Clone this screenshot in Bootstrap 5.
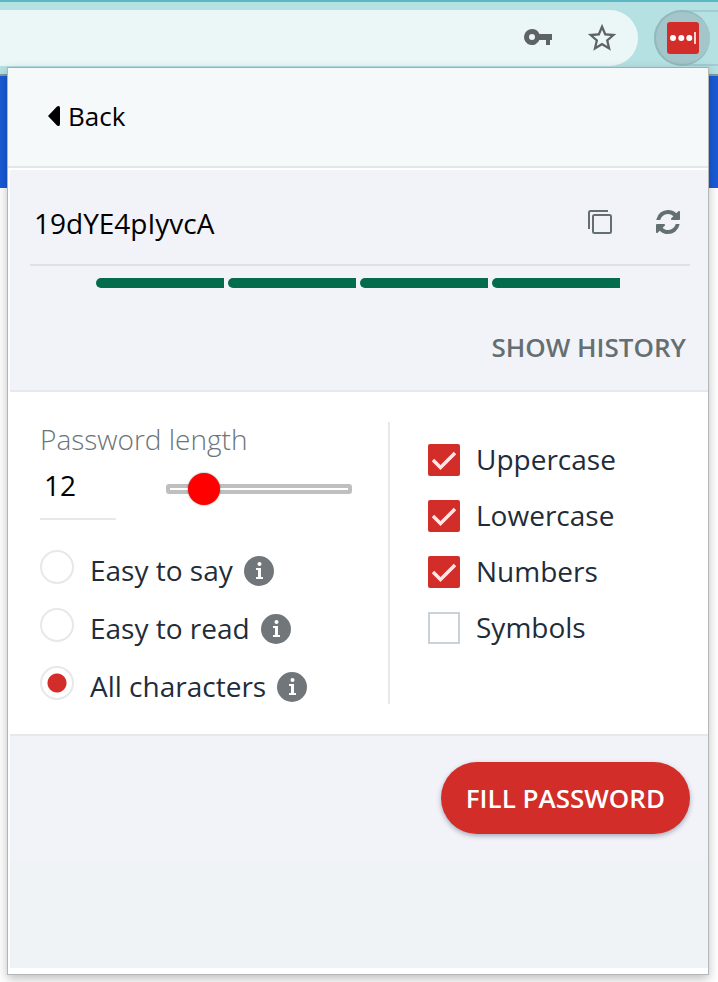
<!DOCTYPE html>
<html lang="en">
<head>
<meta charset="utf-8">
<meta name="viewport" content="width=device-width, initial-scale=1">
<title>Generate password</title>
<link href="https://cdn.jsdelivr.net/npm/bootstrap@5.3.0/dist/css/bootstrap.min.css" rel="stylesheet">
<style>
  body { font-family: "Open Sans", sans-serif; font-size: 28px; line-height: 40px; color: #1f2d3a; background: #fff; min-height: 100vh; }
  .browser-bar { background: #b5e1e3; border-top: 2px solid #5cb8c2; border-bottom: 2px solid #7d9ea6; height: 76px; padding-top: 8px; gap: 16px; }
  .address-box { height: 56px; background: #ebf7f7; border-radius: 0 28px 28px 0; padding-right: 20px; gap: 32px; }
  .bar-icon { width: 32px; height: 32px; }
  .ext-track { width: 64px; height: 56px; border: 2px solid #a1ccd0; border-right: 0; border-radius: 28px 0 0 28px; }
  .ext-btn { width: 56px; height: 56px; margin: -2px; background: #a2c6ca; border: 2px solid #93b9bd; border-width: 2px 0 2px 2px; }
  .page-band { height: 112px; background: #1a5bd7; }
  .popup { top: 67px; left: 7px; right: 9px; background: #fff; border: 1px solid #b3b6b6; border-top-color: #8fb5b8; box-shadow: 0 4px 10px rgba(0,0,0,.25); }
  .popup-head { height: 100px; padding: 0 40px 2px; background: #f5f9fa; border-bottom: 2px solid #e4e7e8; }
  .back-btn { font-size: 26px; color: #000; gap: 8px; }
  .pane-tint { background: #f2f3f8; border-bottom: 2px solid #e7e8ea; margin: 2px 0 0 2px; height: 222px; padding: 0 18px 0 20px; }
  .pw-row { height: 96px; border-bottom: 2px solid #dfe0e2; padding: 12px 8px 0 4px; gap: 40px; }
  .pw-row .btn { margin-bottom: 2px; }
  .pw-text { color: #000; min-width: 0; outline: 0; font-size: 28px; }
  .strength { gap: 4px; margin: 12px 70px 0 66px; }
  .strength-bar { height: 10px; background: #036c4c; border-radius: 5px 0 0 5px; }
  .history-btn { font-size: 26px; color: #646f72; margin: 40px 4px 0 0; }
  .options { padding: 30px 18px 30px 30px; border-bottom: 2px solid #e7e8ea; margin-left: 2px; }
  .opt-left { width: 350px; height: 282px; border-right: 2px solid #e7e8e9; }
  .opt-right { padding: 18px 0 0 38px; gap: 16px; }
  .opt-right label { padding-bottom: 2px; line-height: 38px; }
  .len-label { font-weight: 300; color: #6b7478; line-height: 34px; padding-bottom: 2px; }
  .len-row { gap: 50px; height: 62px; }
  .len-input { width: 76px; height: 62px; padding: 0 4px 6px; color: #000; border-bottom: 2px solid #e7e8e9; outline: 0; }
  .len-range { -webkit-appearance: none; appearance: none; width: 186px; height: 32px; margin: 0; background: transparent; }
  .len-range::-webkit-slider-runnable-track { height: 10px; border: 4px solid #bfbfbf; border-radius: 3px; background: #fff; }
  .len-range::-webkit-slider-thumb { -webkit-appearance: none; width: 32px; height: 32px; margin: -15px -3px 0; border-radius: 50%; background: #f00; box-shadow: 0 0 2px rgba(0,0,0,.5); }
  .radio-list { gap: 18px; margin-top: 30px; }
  .pick-radio, .pick-check { -webkit-appearance: none; appearance: none; flex: none; margin: 0; background: #fff; }
  .pick-radio { width: 34px; height: 34px; border: 2px solid #e7e8e9; border-radius: 50%; margin-right: 16px; }
  .pick-radio:checked { background: radial-gradient(circle, #d22d29 9px, #fff 10px); }
  .radio-line { height: 40px; }
  .info-btn { margin: 5px 0 0 10px; }
  .pick-check { width: 32px; height: 32px; border: 2px solid #cad1da; margin-right: 16px; }
  .pick-check:checked { border: 0; border-radius: 2px; background: #d22d29 url("data:image/svg+xml,%3Csvg xmlns='http://www.w3.org/2000/svg' viewBox='0 0 32 32'%3E%3Cpath d='M5 16l7.500 7.500L27 9' fill='none' stroke='%23fbe9e9' stroke-width='3.500'/%3E%3C/svg%3E"); }
  .popup-foot { background: #f2f3f8; margin-left: 2px; height: 124px; padding: 26px 18px 0; }
  .fill-btn { height: 72px; padding: 0 25px; border-radius: 36px; background: #d22d29; color: #fff; font-size: 26px; box-shadow: 0 2px 5px rgba(40,60,90,.4); }
  .fill-btn:hover { background: #b92522; color: #fff; }
  .popup-rest { height: 108px; background: #eff3f5; margin: 0 0 6px 2px; }
</style>
</head>
<body class="position-relative overflow-hidden">
<header class="browser-bar d-flex">
  <div class="address-box flex-grow-1 d-flex align-items-center justify-content-end">
    <button class="btn p-0 border-0 d-flex" aria-label="Passwords">
      <svg class="bar-icon" viewBox="0 0 32 32"><path fill="#5f6368" fill-rule="evenodd" d="M10 7a8 8 0 1 0 7.400 11H24v5h4v-5h2v-6H17.400A8 8 0 0 0 10 7zm0 5a3 3 0 1 1 0 6 3 3 0 0 1 0-6z"/></svg>
    </button>
    <button class="btn p-0 border-0 d-flex" aria-label="Bookmark">
      <svg class="bar-icon" viewBox="0 0 32 32"><path fill="#5f6368" transform="translate(-1 -1) scale(1.420)" d="M22 9.240l-7.190-.62L12 2 9.190 8.630 2 9.240l5.460 4.730L5.820 21 12 17.270 18.180 21l-1.630-7.030L22 9.240zM12 15.400l-3.760 2.270 1-4.280-3.320-2.880 4.380-.38L12 6.100l1.710 4.040 4.380.38-3.320 2.880 1 4.280L12 15.400z"/></svg>
    </button>
  </div>
  <div class="ext-track">
    <button class="ext-btn rounded-circle p-0 d-flex align-items-center justify-content-center" aria-label="Password manager">
      <svg width="32" height="32" viewBox="0 0 32 32"><rect width="32" height="32" rx="3" fill="#d22d29"/><g fill="#fff"><circle cx="6" cy="16" r="3"/><circle cx="14.300" cy="16" r="3"/><circle cx="22.300" cy="16" r="3"/><path opacity=".8" d="M27 10h2v12h-2z"/></g></svg>
    </button>
  </div>
</header>
<div class="page-band"></div>

<main class="popup position-absolute">
  <div class="popup-head d-flex align-items-center">
    <button class="btn back-btn p-0 border-0 d-flex align-items-center">
      <svg width="12" height="22" viewBox="0 0 12 22"><path d="M0 11L9 1.500Q12 0 12 3v16q0 3-3 1.500z"/></svg>Back
    </button>
  </div>

  <section class="pane-tint">
    <div class="pw-row d-flex align-items-center">
      <input class="pw-text flex-grow-1 border-0 bg-transparent p-0" type="text" value="19dYE4pIyvcA" aria-label="Generated password">
      <button class="btn p-0 border-0 d-flex" aria-label="Copy password">
        <svg width="28" height="28" viewBox="0 0 28 28" fill="none" stroke="#646f72" stroke-width="2"><rect x="7" y="7" width="18" height="18" rx="1.500"/><path d="M3 21V4.500Q3 3 4.500 3H22"/></svg>
      </button>
      <button class="btn p-0 border-0 d-flex" aria-label="Generate again">
        <svg width="28" height="28" viewBox="0 0 1792 1792"><path fill="#646f72" d="M1639 1056q0 5-1 7-64 268-268 434.500T892 1664q-146 0-282.500-55T366 1452l-129 129q-19 19-45 19t-45-19-19-45v-448q0-26 19-45t45-19h448q26 0 45 19t19 45-19 45l-137 137q71 66 161 102t187 36q134 0 250-65t186-179q11-17 53-117 8-23 30-23h192q13 0 22.500 9.500t9.500 22.500zm25-800v448q0 26-19 45t-45 19h-448q-26 0-45-19t-19-45 19-45l138-138Q1097 384 896 384q-134 0-250 65T460 628q-11 17-53 117-8 23-30 23H178q-13 0-22.500-9.500T146 736v-7q65-268 270-434.500T896 128q146 0 284 55.500T1425 340l130-129q19-19 45-19t45 19 19 45z"/></svg>
      </button>
    </div>
    <div class="strength d-flex" role="img" aria-label="Strong password">
      <div class="strength-bar flex-fill"></div>
      <div class="strength-bar flex-fill"></div>
      <div class="strength-bar flex-fill"></div>
      <div class="strength-bar flex-fill"></div>
    </div>
    <div class="d-flex justify-content-end">
      <button class="btn history-btn p-0 border-0 fw-semibold">SHOW HISTORY</button>
    </div>
  </section>

  <section class="options d-flex">
    <div class="opt-left">
      <label class="len-label d-block" for="len">Password length</label>
      <div class="len-row d-flex align-items-center">
        <input class="len-input border-top-0 border-start-0 border-end-0" id="len" type="text" inputmode="numeric" value="12">
        <input class="len-range" type="range" min="4" max="60" value="12" aria-label="Password length slider">
      </div>
      <div class="radio-list d-flex flex-column">
        <div class="radio-line d-flex align-items-start">
          <input class="pick-radio" type="radio" name="kind" id="say"><label for="say">Easy to say</label>
          <button class="btn info-btn p-0 border-0 d-flex" aria-label="About easy to say"><svg width="32" height="32" viewBox="0 0 32 32"><use href="#info"/></svg></button>
        </div>
        <div class="radio-line d-flex align-items-start">
          <input class="pick-radio" type="radio" name="kind" id="read"><label for="read">Easy to read</label>
          <button class="btn info-btn p-0 border-0 d-flex" aria-label="About easy to read"><svg width="32" height="32" viewBox="0 0 32 32"><use href="#info"/></svg></button>
        </div>
        <div class="radio-line d-flex align-items-start">
          <input class="pick-radio" type="radio" name="kind" id="all" checked><label for="all">All characters</label>
          <button class="btn info-btn p-0 border-0 d-flex" aria-label="About all characters"><svg width="32" height="32" viewBox="0 0 32 32"><use href="#info"/></svg></button>
        </div>
      </div>
    </div>
    <div class="opt-right d-flex flex-column">
      <div class="d-flex align-items-center"><input class="pick-check" type="checkbox" id="upper" checked><label for="upper">Uppercase</label></div>
      <div class="d-flex align-items-center"><input class="pick-check" type="checkbox" id="lower" checked><label for="lower">Lowercase</label></div>
      <div class="d-flex align-items-center"><input class="pick-check" type="checkbox" id="nums" checked><label for="nums">Numbers</label></div>
      <div class="d-flex align-items-center"><input class="pick-check" type="checkbox" id="syms"><label for="syms">Symbols</label></div>
    </div>
  </section>

  <div class="popup-foot d-flex justify-content-end align-items-start">
    <button class="btn fill-btn border-0 fw-semibold">FILL PASSWORD</button>
  </div>
  <div class="popup-rest"></div>
</main>

<svg class="d-none">
  <symbol id="info" viewBox="0 0 32 32"><circle cx="16" cy="16" r="15" fill="#70767a"/><g fill="#fff"><circle cx="16.500" cy="9" r="2"/><path d="M13 13h5v9h2v2h-7v-2h2v-7h-2z"/></g></symbol>
</svg>
<script src="https://cdn.jsdelivr.net/npm/bootstrap@5.3.0/dist/js/bootstrap.bundle.min.js"></script>
</body>
</html>
